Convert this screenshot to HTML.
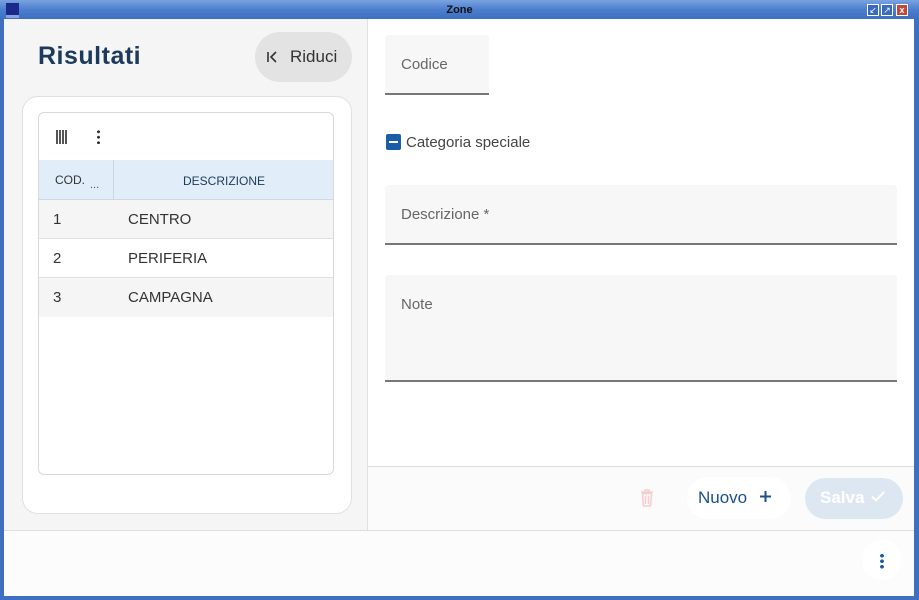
<!DOCTYPE html>
<html><head><style>
*{box-sizing:border-box;margin:0;padding:0}
body{width:919px;height:600px;position:relative;background:#3f6fc0;font-family:"Liberation Sans",sans-serif;overflow:hidden}
.abs{position:absolute}
#title{left:0;top:0;width:919px;height:19px;background:linear-gradient(#7aa3e0,#4c7fcf 50%,#3d6fbf);}
#content{left:4px;top:19px;width:910px;height:577px;background:#fff}
</style></head><body>
<div id="title" class="abs">
  <div class="abs" style="left:6px;top:3px;width:13px;height:15px;background:#1a2a8a;border-bottom:3px solid #8aa0e0"></div>
  <div class="abs" style="left:0;width:919px;top:4px;text-align:center;font:bold 11px 'Liberation Sans';color:#111">Zone</div>
  <div class="abs" style="left:867px;top:4px;width:12px;height:12px;background:#3a6ac0;border:1px solid #fff;color:#fff;font-size:9px;line-height:10px;text-align:center">↙</div>
  <div class="abs" style="left:881px;top:4px;width:12px;height:12px;background:#3a6ac0;border:1px solid #fff;color:#fff;font-size:9px;line-height:10px;text-align:center">↗</div>
  <div class="abs" style="left:896px;top:4px;width:12px;height:12px;background:#c04a3a;border:1px solid #fff;color:#fff;font-size:9px;line-height:10px;text-align:center;font-weight:bold">x</div>
</div>
<div id="content" class="abs">
  <div class="abs" style="left:0;top:0;width:364px;height:511px;background:#f5f5f5;border-right:1px solid #e0e0e0"></div>
  <div class="abs" style="left:34px;top:23px;font-size:25px;font-weight:bold;color:#1b3a5c;letter-spacing:0.5px">Risultati</div>
  <div class="abs" style="left:251px;top:13px;width:97px;height:50px;border-radius:25px;background:#e3e3e3;font-size:17px;color:#333;line-height:50px;padding-left:35px">Riduci</div>
  <svg class="abs" style="left:262px;top:32px" width="12" height="12" viewBox="0 0 12 12"><path d="M2 1v10M10 1L5 6l5 5" stroke="#333" stroke-width="1.6" fill="none"/></svg>
  <div class="abs" style="left:18px;top:77px;width:330px;height:418px;background:#fff;border-radius:16px;border:1px solid #e0e0e0"></div>
  <div class="abs" style="left:34px;top:93px;width:296px;height:363px;border:1px solid #d8d8d8;border-radius:6px;background:#fff;overflow:hidden">
    <div class="abs" style="left:17px;top:17px;width:11px;height:14px;background:repeating-linear-gradient(90deg,#555 0 2px,transparent 2px 3px)"></div>
    <div class="abs" style="left:58px;top:16px;width:3px;height:15px;background:radial-gradient(circle,#333 1.4px,transparent 1.6px) 0 0/3px 5.5px"></div>
    <div class="abs" style="left:0;top:47px;width:296px;height:40px;background:#e1eefa;border-bottom:1px solid #d0d8e0"></div>
    <div class="abs" style="left:74px;top:47px;width:1px;height:40px;background:#cdd6e0"></div>
    <div class="abs" style="left:16px;top:60px;font-size:12px;color:#333">COD.</div>
    <div class="abs" style="left:51px;top:66px;font-size:11px;color:#555">...</div>
    <div class="abs" style="left:75px;width:220px;top:61px;font-size:12px;color:#1b3a5c;text-align:center">DESCRIZIONE</div>
    <div class="abs" style="left:0;top:87px;width:296px;height:39px;background:#f5f5f5;border-bottom:1px solid #e0e0e0"></div>
    <div class="abs" style="left:0;top:126px;width:296px;height:39px;background:#fff;border-bottom:1px solid #e0e0e0"></div>
    <div class="abs" style="left:0;top:165px;width:296px;height:39px;background:#f5f5f5"></div>
    <div class="abs" style="left:14px;top:98px;font-size:15px;color:#333">1</div>
    <div class="abs" style="left:89px;top:98px;font-size:15px;color:#333">CENTRO</div>
    <div class="abs" style="left:14px;top:137px;font-size:15px;color:#333">2</div>
    <div class="abs" style="left:89px;top:137px;font-size:15px;color:#333">PERIFERIA</div>
    <div class="abs" style="left:14px;top:176px;font-size:15px;color:#333">3</div>
    <div class="abs" style="left:89px;top:176px;font-size:15px;color:#333">CAMPAGNA</div>
  </div>
  <div class="abs" style="left:381px;top:16px;width:104px;height:60px;background:#f7f7f7;border-bottom:2px solid #777;border-radius:4px 4px 0 0"></div>
  <div class="abs" style="left:397px;top:37px;font-size:15px;color:#666">Codice</div>
  <div class="abs" style="left:382px;top:115px;width:15px;height:16px;background:#1a5ea8;border-radius:2px"><div class="abs" style="left:3px;top:7px;width:9px;height:2px;background:#fff"></div></div>
  <div class="abs" style="left:402px;top:115px;font-size:15px;color:#444">Categoria speciale</div>
  <div class="abs" style="left:381px;top:166px;width:512px;height:60px;background:#f7f7f7;border-bottom:2px solid #777;border-radius:4px 4px 0 0"></div>
  <div class="abs" style="left:397px;top:187px;font-size:15px;color:#666">Descrizione *</div>
  <div class="abs" style="left:381px;top:256px;width:512px;height:107px;background:#f7f7f7;border-bottom:2px solid #777;border-radius:4px 4px 0 0"></div>
  <div class="abs" style="left:397px;top:277px;font-size:15px;color:#666">Note</div>
  <div class="abs" style="left:364px;top:447px;width:546px;height:64px;background:#fbfbfb;border-top:1px solid #ddd"></div>
  <svg class="abs" style="left:636px;top:470px" width="14" height="18" viewBox="0 0 14 18"><path d="M1 3h12M5 3V1h4v2M2.5 4.5h9l-1 12.5h-7zM5.5 7v8M8.5 7v8" stroke="#f7cccc" stroke-width="1.5" fill="none"/></svg>
  <div class="abs" style="left:683px;top:458px;width:104px;height:42px;border-radius:21px;background:#fff"></div>
  <div class="abs" style="left:694px;top:469px;font-size:17px;color:#1b4f8a">Nuovo</div>
  <svg class="abs" style="left:756px;top:472px" width="11" height="11" viewBox="0 0 11 11"><path d="M5.5 0v11M0 5.5h11" stroke="#1b4f8a" stroke-width="2"/></svg>
  <div class="abs" style="left:801px;top:459px;width:98px;height:41px;border-radius:21px;background:#dde7f1"></div>
  <div class="abs" style="left:816px;top:469px;font-size:17px;color:#fff;font-weight:bold">Salva</div>
  <svg class="abs" style="left:867px;top:472px" width="14" height="11" viewBox="0 0 14 11"><path d="M1 5.5l4 4L13 1" stroke="#fff" stroke-width="2" fill="none"/></svg>
  <div class="abs" style="left:0;top:511px;width:910px;height:66px;background:#fcfcfc;border-top:1px solid #ddd"></div>
  <div class="abs" style="left:858px;top:521px;width:40px;height:40px;border-radius:20px;background:#fff"></div>
  <div class="abs" style="left:876px;top:534px;width:4px;height:16px;background:radial-gradient(circle,#1a5ea8 1.8px,transparent 2px) 0 0/4px 5.5px"></div>
</div>
</body></html>
